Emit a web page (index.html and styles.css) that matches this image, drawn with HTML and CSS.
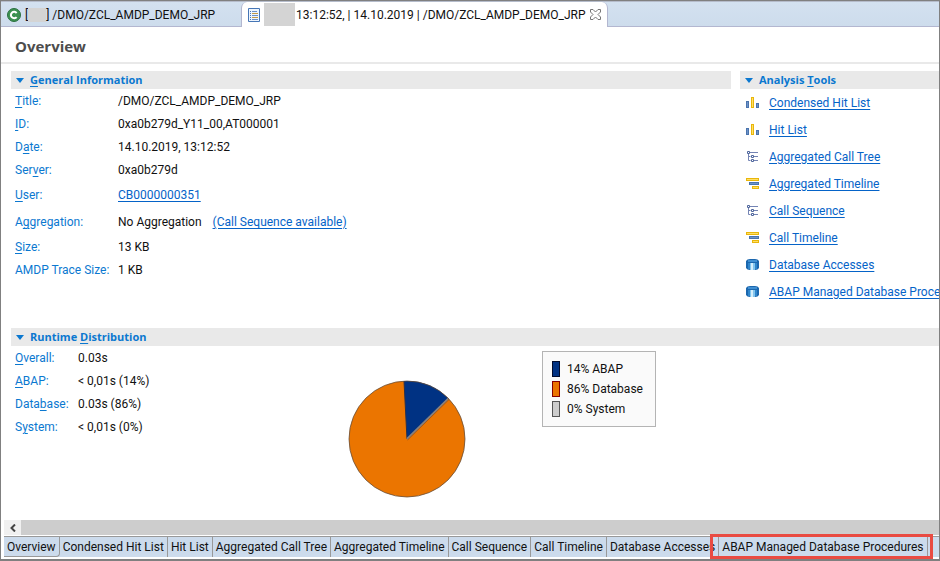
FILE: index.html
```html
<!DOCTYPE html>
<html lang="en">
<head>
<meta charset="utf-8">
<title>Overview</title>
<link rel="stylesheet" href="styles.css">
</head>
<body>
<svg class="sprite" aria-hidden="true">
  <symbol id="bars" viewBox="0 0 14 12">
    <path fill="#4a74ae" d="M0 4h3v7H0zM10 6h3v5h-3z"/>
    <path fill="#6f93c6" d="M1 5h1v5H1zM11 7h1v3h-1z"/>
    <path fill="#e9b60a" d="M5 0h3v11H5z"/>
    <path fill="#ffdf66" d="M6 1h1v9H6z"/>
  </symbol>
  <symbol id="tree" viewBox="0 0 14 12">
    <path fill="none" stroke="#7484b4" d="M2.500 3v6.500h2M2.500 5.500h2M4 1.500h8M8 5.500h4M8 9.500h4"/>
    <path fill="#fff" stroke="#4f669c" d="M1.500.500h2v2h-2zM5.500 4.500h2v2h-2zM5.500 8.500h2v2h-2z"/>
  </symbol>
  <symbol id="timeline" viewBox="0 0 14 12">
    <path fill="#e9b60a" d="M0 0h13v3H0zM6 8h7v3H6z"/>
    <path fill="#ffdf66" d="M1 1h11v1H1zM7 9h5v1H7z"/>
    <path fill="#4a74ae" d="M3 4h10v3H3z"/>
    <path fill="#6f93c6" d="M4 5h8v1H4z"/>
  </symbol>
  <symbol id="db" viewBox="0 0 14 12">
    <path fill="#1b67ae" d="M0 2Q1 0 4 0h5q3 0 4 2v7q-1 2-4 2H4q-3 0-4-2z"/>
    <path fill="#3f8fd2" d="M2 1h9v2H2z"/>
    <path fill="#2f86cc" d="M2 4h9v6H2z"/>
    <path fill="#83c5ee" d="M4 4h5v7H4z"/>
    <path fill="#d5effc" d="M5 4h2v7H5z"/>
  </symbol>
</svg>
<div class="window">
  <div class="editor-tabs">
    <div class="editor-tab">
      <svg class="tab-icon" width="14" height="14" viewBox="0 0 14 14" aria-hidden="true"><circle cx="7" cy="7" r="6.500" fill="#3c9150" stroke="#2a7040"/><path d="M9.600 5A3.200 3.200 0 1 0 9.600 9" fill="none" stroke="#fff" stroke-width="2"/></svg>
      <span>[</span><span class="blank blank-small"></span><span>] /DMO/ZCL_AMDP_DEMO_JRP</span>
    </div>
    <div class="editor-tab active">
      <svg class="tab-icon" width="12" height="14" viewBox="0 0 12 14" aria-hidden="true"><path d="M.500.500h11v13H.500z" fill="#eef5fd" stroke="#4676b6"/><path d="M2 3.500h1M2 5.500h1M2 7.500h1M2 9.500h1M2 11.500h1" stroke="#4676b6"/><path d="M4 3.500h5M4 7.500h6M4 11.500h6" stroke="#6b8fc5"/><path d="M4 5.500h6M4 9.500h6" stroke="#c49a45"/></svg>
      <span class="blank blank-large"></span><span>13:12:52, | 14.10.2019 | /DMO/ZCL_AMDP_DEMO_JRP</span>
      <button class="close" aria-label="Close"><svg width="11" height="11" viewBox="0 0 11 11"><path d="M.500.500h2.500l2.500 2.500L8 .500h2.500v2.500L8 5.500l2.500 2.500v2.500H8L5.500 8 3 10.500H.500V8L3 5.500.500 3z" fill="#fff" stroke="#777"/></svg></button>
    </div>
  </div>
  <header class="page-header"><h1>Overview</h1></header>
  <main class="content">
    <section class="general">
      <h2><span class="twistie"></span><span><u>G</u>eneral Information</span></h2>
      <dl class="info">
        <dt><u>T</u>itle:</dt><dd>/DMO/ZCL_AMDP_DEMO_JRP</dd>
        <dt><u>I</u>D:</dt><dd>0xa0b279d_Y11_00,AT000001</dd>
        <dt>D<u>a</u>te:</dt><dd>14.10.2019, 13:12:52</dd>
        <dt>Ser<u>v</u>er:</dt><dd>0xa0b279d</dd>
        <dt class="tall"><u>U</u>ser:</dt><dd class="tall"><a href="#user">CB0000000351</a></dd>
        <dt class="tall">A<u>g</u>gregation:</dt><dd class="tall">No Aggregation <a class="note" href="#sequence">(Call Sequence available)</a></dd>
        <dt><u>S</u>ize:</dt><dd>13 KB</dd>
        <dt>AMDP Trace Size:</dt><dd>1 KB</dd>
      </dl>
    </section>
    <section class="tools">
      <h2><span class="twistie"></span><span>Analysis <u>T</u>ools</span></h2>
      <ul>
        <li><svg><use href="#bars"/></svg><a href="#condensed">Condensed Hit List</a></li>
        <li><svg><use href="#bars"/></svg><a href="#hits">Hit List</a></li>
        <li><svg><use href="#tree"/></svg><a href="#calltree">Aggregated Call Tree</a></li>
        <li><svg><use href="#timeline"/></svg><a href="#aggtime">Aggregated Timeline</a></li>
        <li><svg><use href="#tree"/></svg><a href="#sequence">Call Sequence</a></li>
        <li><svg><use href="#timeline"/></svg><a href="#calltime">Call Timeline</a></li>
        <li><svg><use href="#db"/></svg><a href="#access">Database Accesses</a></li>
        <li><svg><use href="#db"/></svg><a href="#amdp">ABAP Managed Database Procedures</a></li>
      </ul>
    </section>
    <section class="runtime">
      <h2><span class="twistie"></span><span>Runtime <u>D</u>istribution</span></h2>
      <div class="runtime-body">
        <dl class="info times">
          <dt><u>O</u>verall:</dt><dd>0.03s</dd>
          <dt><u>A</u>BAP:</dt><dd>&lt; 0,01s (14%)</dd>
          <dt>Data<u>b</u>ase:</dt><dd>0.03s (86%)</dd>
          <dt>S<u>y</u>stem:</dt><dd>&lt; 0,01s (0%)</dd>
        </dl>
        <svg class="pie" width="118" height="118" viewBox="0 0 118 118" role="img" aria-label="Runtime distribution">
          <circle cx="59" cy="59" r="58" fill="#eb7500"/>
          <path d="M59 59L56 1A58 58 0 0 1 100 18z" fill="#003283"/>
          <path d="M59 59L56 1" stroke="#28304c" fill="none"/>
          <path d="M59 59L100.500 18.500" stroke="#85807f" stroke-width="2" fill="none"/>
          <path d="M59.500 60L101 19.500" stroke="#a85713" fill="none"/>
          <circle cx="59" cy="59" r="58" fill="none" stroke="#5e4b3c" stroke-opacity=".75"/>
        </svg>
        <ul class="legend">
          <li><span class="key abap"></span>14% ABAP</li>
          <li><span class="key database"></span>86% Database</li>
          <li><span class="key system"></span>0% System</li>
        </ul>
      </div>
    </section>
  </main>
  <div class="scrollbar"><button aria-label="Scroll left"><svg width="6" height="8" viewBox="0 0 6 8"><path d="M5 .500L1.500 4 5 7.500" fill="none" stroke="#444" stroke-width="2"/></svg></button></div>
  <nav class="page-tabs">
    <button class="current">Overview</button>
    <button>Condensed Hit List</button>
    <button>Hit List</button>
    <button>Aggregated Call Tree</button>
    <button>Aggregated Timeline</button>
    <button>Call Sequence</button>
    <button>Call Timeline</button>
    <button>Database Accesses</button>
    <button class="marked">ABAP Managed Database Procedures</button>
  </nav>
</div>
</body>
</html>
```
FILE: styles.css
```css
* { box-sizing: border-box; }
body {
  margin: 0;
  font: 12px/16px Roboto, "Open Sans", sans-serif;
  color: #111;
  background: #fff;
}
h1, h2, ul, dl, dd { margin: 0; padding: 0; }
h1, h2 { font-family: "Open Sans", "Noto Sans", sans-serif; }
ul { list-style: none; }
button { font: inherit; color: inherit; border: 0; padding: 0; background: none; }
a { color: #0563c8; text-underline-offset: 2px; }
u { text-underline-offset: 2px; }
.sprite { display: none; }

.window {
  display: flex;
  flex-direction: column;
  height: 100vh;
  overflow: hidden;
  border: 1px solid #808080;
  border-bottom-width: 2px;
}

.editor-tabs {
  display: flex;
  flex: none;
  height: 26px;
  padding-left: 1px;
  border-top: 1px solid #b5bccb;
  background: linear-gradient(#d3e1f0, #cddcec);
  box-shadow: inset 0 -1px #b3b7d0;
}
.editor-tab {
  display: flex;
  align-items: center;
  width: 239px;
  padding-left: 5px;
  white-space: pre;
}
.editor-tab.active {
  width: auto;
  padding: 0 6px;
  background: #fff;
  border: 1px solid #b3b7d0;
  border-width: 0 1px;
  border-radius: 6px 6px 0 0;
}
.tab-icon { margin-right: 4px; }
.blank { background: #d4d4d4; }
.blank-small { width: 18px; height: 14px; }
.blank-large { width: 31px; height: 23px; margin-right: 1px; }
.close { display: flex; margin-left: 4px; }

.page-header {
  flex: none;
  height: 37px;
  padding: 9px 14px 0;
  border-bottom: 2px solid #e9e9e9;
}
h1 { font-size: 15px; line-height: 20px; color: #4d4d4d; }

.content {
  display: grid;
  grid-template-columns: minmax(0, 1fr) 199px;
  grid-template-rows: 257px auto;
  column-gap: 9px;
  align-content: start;
  flex: 1;
  min-height: 0;
  padding: 7px 0 0 10px;
  overflow: hidden;
}
h2 {
  display: flex;
  align-items: center;
  height: 18px;
  padding-left: 5px;
  font-size: 11px;
  color: #0b78d0;
  background: #e9e9e9;
}
.twistie {
  width: 8px;
  margin-right: 6px;
  border: 4px solid transparent;
  border-top: 5px solid #0b78d0;
  border-bottom: 0;
}
.info {
  display: grid;
  grid-template-columns: 103px 1fr;
  padding: 1px 0 0 4px;
  line-height: 23px;
}
.info dt { color: #0b78d0; }
.info .tall { line-height: 27px; }
.note { margin-left: 8px; }

.tools { overflow: hidden; }
.tools ul { padding-left: 6px; }
.tools li {
  display: flex;
  align-items: center;
  height: 27px;
  white-space: nowrap;
}
.tools svg { flex: none; width: 14px; height: 12px; margin-right: 9px; }

.runtime { grid-column: 1 / -1; }
.runtime-body { display: flex; align-items: flex-start; }
.times { grid-template-columns: 63px 1fr; width: 180px; }
.pie { margin: 34px 76px 0 157px; }
.legend {
  padding: 7px 12px 7px 9px;
  margin-top: 5px;
  border: 1px solid #b4b4b4;
  background: #fafafa;
  line-height: 20px;
}
.legend li { display: flex; align-items: center; }
.key { width: 8px; height: 16px; margin-right: 7px; border: 1px solid; }
.abap { background: #003283; border-color: #000b2c; }
.database { background: #eb7500; border-color: #850000; }
.system { background: #ccc; border-color: #555; }

.scrollbar { display: flex; flex: none; height: 15px; margin-left: 3px; background: #cdcdcd; }
.scrollbar button { display: flex; align-items: center; justify-content: center; width: 17px; background: #f0f0f0; }

.page-tabs {
  display: flex;
  flex: none;
  height: 22px;
  margin: 1px 0 1px 3px;
  border-top: 1px solid #999;
  border-bottom: 1px solid #fff;
  background: #ccdbec;
}
.page-tabs button {
  flex: none;
  padding: 0 3px;
  border-right: 1px solid #999;
  white-space: nowrap;
}
.page-tabs .current { border-bottom: 1px solid #999; border-radius: 0 0 4px 0; }
.page-tabs .marked { position: relative; }
.marked::after {
  content: "";
  position: absolute;
  inset: -3px -6px -2px -9px;
  border: 3px solid #e94b42;
}
```
